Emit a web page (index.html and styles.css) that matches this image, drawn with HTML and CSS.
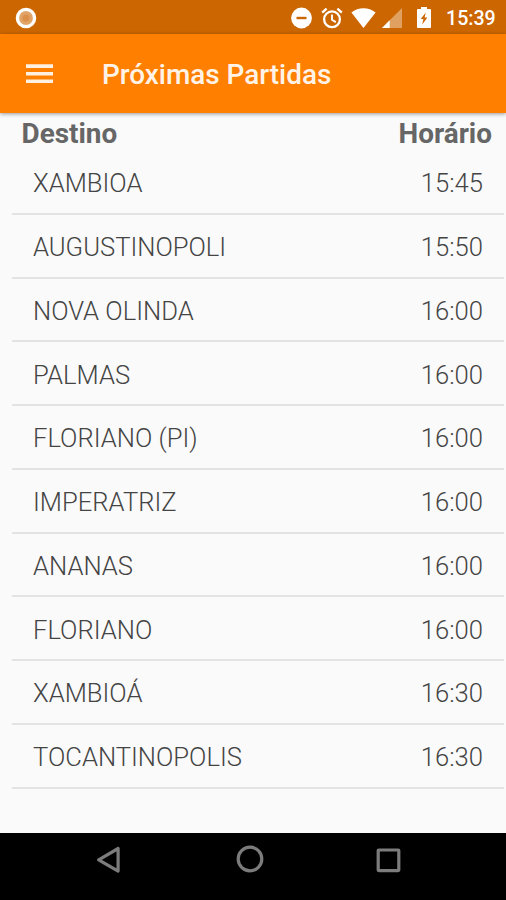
FILE: index.html
```html
<!DOCTYPE html>
<html lang="pt-BR">
<head>
    <meta charset="UTF-8">
    <meta name="viewport" content="width=device-width, initial-scale=1.0">
    <title>Próximas Partidas</title>
    <link rel="stylesheet" href="styles.css">
</head>
<body>
    <div class="status-bar">
        <svg class="icon-record" width="22" height="22" viewBox="0 0 22 22">
            <circle cx="11" cy="11" r="8.600" fill="#e0a368" stroke="#fff" stroke-width="3.400"/>
            <circle cx="11" cy="11" r="3.500" fill="#db8f48"/>
        </svg>
        <div class="status-icons">
            <svg class="icon-dnd" width="21" height="22" viewBox="0 0 21 22">
                <circle cx="10.5" cy="11" r="10.4" fill="#fff"/>
                <path d="M5.5 11h10" stroke="#cc6600" stroke-width="2.4"/>
            </svg>
            <svg class="icon-alarm" width="22" height="22" viewBox="0 0 22 22" fill="none" stroke="#fff">
                <circle cx="11" cy="12.3" r="7.9" stroke-width="2.3"/>
                <path d="M11 7.5v5.2l3.8 2.4" stroke-width="1.9"/>
                <path d="M1.2 5.6l4.4-3.9M20.8 5.6l-4.4-3.9" stroke-width="2.4"/>
            </svg>
            <svg class="icon-wifi" width="25" height="20" viewBox="0 0 25 20">
                <path d="M12.5 20L.4 4.600C3.800 1.700 8 .2 12.500 .2s8.700 1.500 12.100 4.400z" fill="#fff"/>
            </svg>
            <svg class="icon-signal" width="20" height="20" viewBox="0 0 20 20">
                <path d="M0 20L20 0v20z" fill="#e0a05f"/>
                <path d="M0 20l7.700-7.700V20z" fill="#fff"/>
            </svg>
            <svg class="icon-battery" width="14" height="21" viewBox="0 0 14 21">
                <path d="M4 0h6v2h3a1 1 0 0 1 1 1v17a1 1 0 0 1-1 1H1a1 1 0 0 1-1-1V3a1 1 0 0 1 1-1h3z" fill="#fff"/>
                <path d="M8.800 5.500L3.700 11.900h2.700l-1.200 5.600 5.200-7H7.600z" fill="#cc6600"/>
            </svg>
            <span class="clock">15:39</span>
        </div>
    </div>

    <div class="toolbar">
        <svg class="icon-menu" width="27" height="20" viewBox="0 0 27 20">
            <path d="M0 2.100h27M0 9.700h27M0 17.300h27" stroke="#fff0e2" stroke-width="3.600"/>
        </svg>
        <h1 class="title">Próximas Partidas</h1>
    </div>

    <div class="content">
        <div class="list-header">
            <span>Destino</span>
            <span>Horário</span>
        </div>
        <ul class="list">
            <li><span>XAMBIOA</span><span>15:45</span></li>
            <li><span>AUGUSTINOPOLI</span><span>15:50</span></li>
            <li><span>NOVA OLINDA</span><span>16:00</span></li>
            <li><span>PALMAS</span><span>16:00</span></li>
            <li><span>FLORIANO (PI)</span><span>16:00</span></li>
            <li><span>IMPERATRIZ</span><span>16:00</span></li>
            <li><span>ANANAS</span><span>16:00</span></li>
            <li><span>FLORIANO</span><span>16:00</span></li>
            <li><span>XAMBIOÁ</span><span>16:30</span></li>
            <li><span>TOCANTINOPOLIS</span><span>16:30</span></li>
        </ul>
    </div>

    <div class="nav-bar">
        <svg width="28" height="28" viewBox="0 0 28 28">
            <path d="M1.700 14.800L21.100 3.500v22.600z"/>
        </svg>
        <svg width="28" height="28" viewBox="0 0 28 28">
            <circle cx="14" cy="14" r="11.800"/>
        </svg>
        <svg width="28" height="28" viewBox="0 0 28 28">
            <rect x="3.200" y="5" width="20.600" height="20.600" rx="0.500"/>
        </svg>
    </div>
</body>
</html>
```

FILE: styles.css
```css
* {
    box-sizing: border-box;
}

body {
    display: flex;
    flex-direction: column;
    height: 100vh;
    margin: 0;
    overflow: hidden;
    background-color: #fafafa;
    font-family: Roboto, sans-serif;
    color: #666;
}

svg {
    display: block;
    flex-shrink: 0;
}

.status-bar {
    display: flex;
    justify-content: space-between;
    align-items: center;
    height: 34px;
    padding: 1px 10px 0 15px;
    background-color: #cc6600;
}

.status-icons {
    display: flex;
    align-items: center;
}

.icon-alarm {
    margin-left: 9px;
}

.icon-wifi {
    margin-left: 8px;
}

.icon-signal {
    margin-left: 6px;
}

.icon-battery {
    margin-left: 15px;
}

.clock {
    margin-left: 15px;
    width: 50px;
    padding-top: 2px;
    font-size: 19.6px;
    font-weight: 500;
    line-height: 22px;
    color: #fff;
}

.toolbar {
    display: flex;
    align-items: center;
    height: 79px;
    padding-left: 26px;
    background-color: #ff8000;
    box-shadow: 0 1px 4px rgba(0, 0, 0, 0.4);
    z-index: 1;
}

.title {
    margin: 3px 0 0 49px;
    font-size: 27.9px;
    font-weight: 500;
    line-height: 32px;
    color: #fff3e8;
}

.content {
    flex: 1;
}

.list-header {
    display: flex;
    justify-content: space-between;
    height: 38px;
    padding: 5px 14px 0 21.5px;
    font-size: 27.9px;
    font-weight: 700;
    line-height: 32px;
}

.list {
    margin: 0;
    padding: 0 2px 0 12px;
    list-style: none;
}

.list li {
    display: flex;
    justify-content: space-between;
    height: 63.75px;
    padding: 17.25px 21px 0;
    border-bottom: 2px solid #e3e3e3;
    font-size: 25.6px;
    font-weight: 300;
    line-height: 30px;
    color: #444;
}

.nav-bar {
    display: flex;
    justify-content: center;
    gap: 111px;
    height: 67px;
    padding: 12px 7px 0 0;
    background-color: #000;
}

.nav-bar svg {
    fill: none;
    stroke: #7c7c7c;
    stroke-width: 3.2;
    stroke-linejoin: round;
}
```
